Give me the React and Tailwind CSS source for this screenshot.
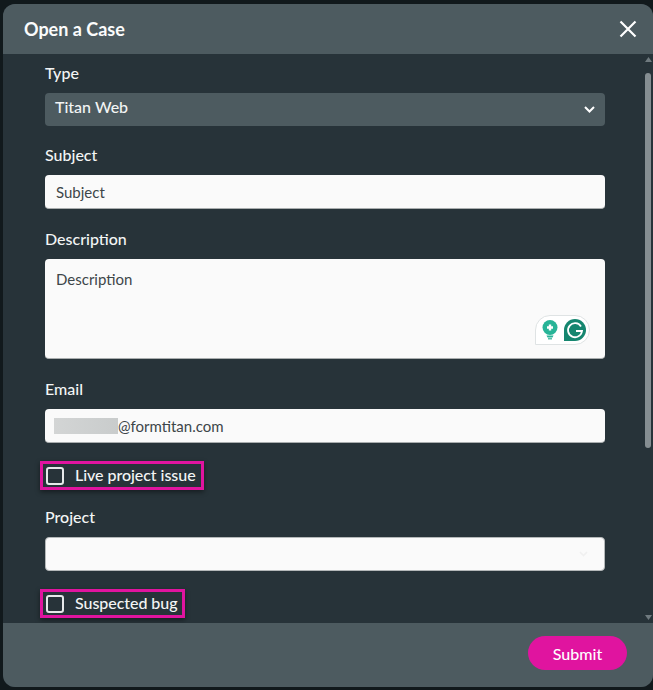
const Label = ({ children, className = "" }) => (
  <div className={`h-[24px] flex items-center text-[16px] leading-[24px] font-medium text-[#f3f5f5] ${className}`}>{children}</div>
);

const Check = ({ children, className = "" }) => (
  <div className={`-ml-[5px] w-fit h-[29px] flex items-center border-[3px] border-[#e0149f] pl-[3px] pr-[5px] shadow-[0_2px_5px_rgba(0,0,0,0.45)] ${className}`}>
    <span className="w-[18px] h-[18px] border-2 border-[#e6e9ea] rounded-[3px] bg-transparent" />
    <span className="ml-[11px] mt-[-2px] text-[16px] font-medium tracking-[-0.05px] text-[#f3f5f5] leading-[20px]">{children}</span>
  </div>
);

const inputCls = "h-[34px] rounded-[4px] bg-[#fafafa] border-b border-[#a9adae] flex items-center text-[15px] text-[#3d4649]";

export default function App() {
  return (
    <div className="w-[653px] h-[690px] bg-[#11191c] pt-[4px] pl-[3px] pb-[3px] overflow-hidden" style={{ fontFamily: "Lato, sans-serif" }}>
      <div className="w-[650px] h-[683px] rounded-[12px] overflow-hidden flex flex-col bg-[#273339]">
        <div className="h-[50px] shrink-0 bg-[#4d5b60] flex items-center justify-between pl-[21px] pr-[15px]">
          <div className="text-[18px] font-bold text-[#fbfcfc] leading-[24px]">Open a Case</div>
          <svg width="20" height="20" viewBox="0 0 20 20" fill="none" stroke="#ffffff" strokeWidth="2.2" className="mt-[-1px]">
            <path d="M2.5 2.5 L17.5 17.5 M17.5 2.5 L2.5 17.5" />
          </svg>
        </div>
        <div className="flex-1 flex min-h-0">
          <div className="w-[642px] pl-[42px] pr-[40px] pt-[7px] flex flex-col">
            <Label>Type</Label>
            <div className="mt-[8px] h-[33px] rounded-[4px] bg-[#4d5b60] flex items-center justify-between pl-[10px] pr-[10px] text-[#f3f5f5] text-[16px] font-medium">
              <span className="mt-[-5px]">Titan Web</span>
              <svg width="11" height="7" viewBox="0 0 11 7" fill="none" stroke="#ffffff" strokeWidth="2">
                <path d="M1 1 L5.5 5.5 L10 1" />
              </svg>
            </div>
            <Label className="mt-[17px]">Subject</Label>
            <div className={`mt-[8px] pl-[11px] pt-[2px] ${inputCls}`}>Subject</div>
            <Label className="mt-[18px]">Description</Label>
            <div className="mt-[8px] relative h-[100px] rounded-[4px] bg-[#fafafa] border-b border-[#a9adae] pl-[11px] pt-[9px] text-[15px] leading-[22px] text-[#3d4649]">
              Description
              <div className="absolute left-[490px] top-[56px] w-[55px] h-[30px] bg-white border border-[#dfe3e4] rounded-[15px] rounded-bl-none flex items-center pl-[6px]">
                <svg width="16" height="20" viewBox="0 0 16 20" className="mt-[-1px]">
                  <circle cx="8" cy="7.5" r="7.5" fill="#27b497" />
                  <path d="M8 4.5 V10.5 M5 7.5 H11" stroke="#ffffff" strokeWidth="2.4" />
                  <path d="M4.5 15.5 H11.5 L10.5 17.5 H5.5 Z" fill="#27b497" />
                  <path d="M6 18.8 H10" stroke="#27b497" strokeWidth="1.2" />
                </svg>
                <svg width="22" height="22" viewBox="0 0 22 22" className="ml-[6px]">
                  <path d="M11 0 A11 11 0 0 1 11 22 H0 V11 A11 11 0 0 1 11 0 Z" fill="#15866f" />
                  <path d="M17 7.5 A7 7 0 1 0 18 12 H12" fill="none" stroke="#ffffff" strokeWidth="1.8" />
                </svg>
              </div>
            </div>
            <Label className="mt-[18px]">Email</Label>
            <div className={`mt-[8px] pl-[9px] ${inputCls}`}>
              <span className="w-[64px] h-[16px] bg-gradient-to-r from-[#d3d5d5] to-[#c9cccc]" />
              <span className="mt-[1px]">@formtitan.com</span>
            </div>
            <Check className="mt-[18px]">Live project issue</Check>
            <Label className="mt-[15px]">Project</Label>
            <div className={`mt-[8px] relative justify-end pr-[16px] border border-[#b4b8b9] ${inputCls}`}>
              <svg width="9" height="6" viewBox="0 0 9 6" fill="none" stroke="#f0f0f0" strokeWidth="1.6">
                <path d="M1 1 L4.5 4.5 L8 1" />
              </svg>
            </div>
            <Check className="mt-[18px]">Suspected bug</Check>
          </div>
          <div className="w-[6px] pt-[3px] pb-[3px] flex flex-col items-center">
            <svg width="7" height="5" viewBox="0 0 7 5" className="shrink-0"><path d="M3.5 0 L7 5 H0 Z" fill="#6f7a7f" /></svg>
            <div className="w-[6px] mt-[11px] h-[375px] shrink-0 rounded-[3px] bg-[#858e92]" />
            <div className="flex-1" />
            <svg width="7" height="5" viewBox="0 0 7 5" className="shrink-0"><path d="M0 0 H7 L3.5 5 Z" fill="#6f7a7f" /></svg>
          </div>
        </div>
        <div className="h-[64px] shrink-0 bg-[#4d5b60] flex items-start justify-end pr-[26px] pt-[13px]">
          <div className="w-[99px] h-[34px] pt-[2px] rounded-full bg-[#e0149f] flex items-center justify-center text-white text-[16px] font-medium">Submit</div>
        </div>
      </div>
    </div>
  );
}
